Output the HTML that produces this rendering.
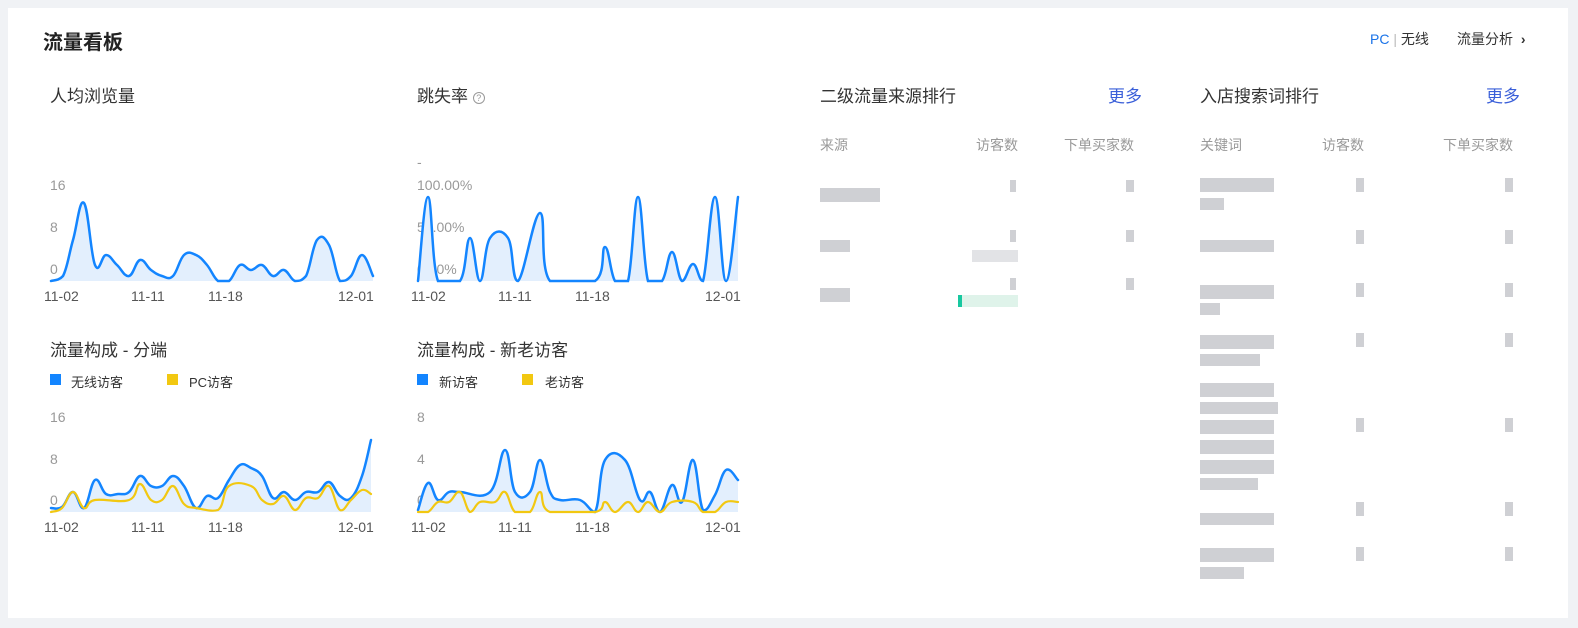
<!DOCTYPE html>
<html><head><meta charset="utf-8"><style>
*{margin:0;padding:0;box-sizing:border-box}
body{width:1578px;height:628px;background:#f0f2f5;font-family:"Liberation Sans","Noto Sans CJK SC",sans-serif;position:relative;overflow:hidden}
.card{position:absolute;left:8px;top:8px;width:1560px;height:610px;background:#fff}
.a{position:absolute;white-space:nowrap}
.t{font-size:17px;color:#333}
.h{font-size:15px;color:#999}
.g{position:absolute;background:#cfd0d4}
.gl{position:absolute;background:#e2e3e6}
.ax{font-size:14px;color:#999}
.xl{font-size:14px;color:#555}
.lg{font-size:13px;color:#333}
.sq{position:absolute;width:11px;height:11px}
</style></head><body>
<div class="card"></div>
<div class="a" style="left:43px;top:26px;font-size:20px;font-weight:bold;color:#222">流量看板</div>
<div class="a" style="left:1370px;top:29px;font-size:14px;color:#333"><span style="color:#1a73e8">PC</span> <span style="color:#bbb">|</span> 无线</div>
<div class="a" style="left:1457px;top:29px;font-size:14px;color:#333">流量分析 <span style="font-weight:bold;margin-left:4px">›</span></div>

<div class="a t" style="left:50px;top:82px">人均浏览量</div>
<div class="a t" style="left:417px;top:82px">跳失率 <span style="display:inline-block;width:12px;height:12px;border:1px solid #999;border-radius:50%;font-size:9px;color:#999;text-align:center;line-height:10px;vertical-align:1px">?</span></div>
<div class="a t" style="left:50px;top:336px">流量构成 - 分端</div>
<div class="a t" style="left:417px;top:336px">流量构成 - 新老访客</div>

<div class="sq" style="left:50px;top:374px;background:#1385ff"></div><div class="a lg" style="left:71px;top:372px">无线访客</div>
<div class="sq" style="left:167px;top:374px;background:#f2c811"></div><div class="a lg" style="left:189px;top:372px">PC访客</div>
<div class="sq" style="left:417px;top:374px;background:#1385ff"></div><div class="a lg" style="left:439px;top:372px">新访客</div>
<div class="sq" style="left:522px;top:374px;background:#f2c811"></div><div class="a lg" style="left:545px;top:372px">老访客</div>

<div class="a ax" style="left:50px;top:177px">16</div><div class="a ax" style="left:50px;top:219px">8</div><div class="a ax" style="left:50px;top:261px">0</div>
<div class="a ax" style="left:417px;top:154px">-</div>
<div class="a ax" style="left:417px;top:177px">100.00%</div><div class="a ax" style="left:417px;top:219px">50.00%</div><div class="a ax" style="left:417px;top:261px">0.00%</div>
<div class="a ax" style="left:50px;top:409px">16</div><div class="a ax" style="left:50px;top:451px">8</div><div class="a ax" style="left:50px;top:492px">0</div>
<div class="a ax" style="left:417px;top:409px">8</div><div class="a ax" style="left:417px;top:451px">4</div><div class="a ax" style="left:417px;top:492px">0</div>

<div class="a xl" style="left:44px;top:288px">11-02</div><div class="a xl" style="left:131px;top:288px">11-11</div><div class="a xl" style="left:208px;top:288px">11-18</div><div class="a xl" style="left:338px;top:288px">12-01</div>
<div class="a xl" style="left:411px;top:288px">11-02</div><div class="a xl" style="left:498px;top:288px">11-11</div><div class="a xl" style="left:575px;top:288px">11-18</div><div class="a xl" style="left:705px;top:288px">12-01</div>
<div class="a xl" style="left:44px;top:519px">11-02</div><div class="a xl" style="left:131px;top:519px">11-11</div><div class="a xl" style="left:208px;top:519px">11-18</div><div class="a xl" style="left:338px;top:519px">12-01</div>
<div class="a xl" style="left:411px;top:519px">11-02</div><div class="a xl" style="left:498px;top:519px">11-11</div><div class="a xl" style="left:575px;top:519px">11-18</div><div class="a xl" style="left:705px;top:519px">12-01</div>

<svg class="a" id="sv" style="left:0;top:0" width="1578" height="628"></svg>
<script>
var data=[
 {b:"#1385ff",base:281,p:"51,281 63,276 73,240 84,203 95,265 106,255 117,265 129,276 140,260 151,270 162,276 173,276 184,255 196,255 207,265 218,281 229,281 240,265 251,270 262,265 273,276 284,270 295,281 306,276 317,240 329,245 340,281 351,276 362,255 373,276",f:1},
 {b:"#1385ff",base:281,p:"418,281 428,197 438,281 460,281 470,238 480,281 490,238 508,238 518,281 540,213 550,281 595,281 605,247 615,281 628,281 638,197 648,281 662,281 672,252 682,281 693,264 703,281 715,197 726,281 738,197",f:1},
 {b:"#1385ff",base:512,p:"51,508 62,507 73,492 84,508 95,480 106,494 118,494 129,492 140,476 151,486 162,486 173,476 184,486 196,508 207,496 218,498 229,480 240,465 251,468 262,476 273,498 284,492 295,500 306,492 318,492 329,482 340,496 351,498 362,476 371,440",f:1},
 {b:"#1385ff",base:512,p:"418,510 428,483 438,500 449,492 460,492 490,492 505,450 515,492 530,492 540,460 550,492 560,500 580,500 595,512 605,460 625,460 640,500 650,492 660,512 672,485 682,502 693,460 703,510 715,495 726,470 738,480",f:1},
 {b:"#f2c811",base:512,p:"51,512 62,508 73,492 84,508 95,500 129,500 140,484 151,500 162,500 173,486 184,504 196,508 218,510 229,486 251,486 262,500 273,504 284,496 295,510 306,498 318,498 329,486 340,510 351,500 362,490 371,494",f:0},
 {b:"#f2c811",base:512,p:"418,512 428,512 438,502 449,502 460,492 470,512 480,502 495,502 505,492 515,512 530,512 540,492 550,512 595,512 605,502 615,512 628,502 638,512 648,502 660,512 672,502 693,502 703,512 715,512 726,502 738,502",f:0}
];
var h="",t=0.2;
data.forEach(function(s){
 var pts=s.p.split(" ").map(function(q){var a=q.split(",");return [+a[0],+a[1]]});
 var d="M"+pts[0];
 for(var i=0;i<pts.length-1;i++){
  var p0=pts[i-1]||pts[i],p1=pts[i],p2=pts[i+1],p3=pts[i+2]||p2;
  var c1=[p1[0]+(p2[0]-p0[0])*t,Math.min(s.base,p1[1]+(p2[1]-p0[1])*t)];
  var c2=[p2[0]-(p3[0]-p1[0])*t,Math.min(s.base,p2[1]-(p3[1]-p1[1])*t)];
  d+=" C"+c1+" "+c2+" "+p2;
 }
 if(s.f) h+='<path d="'+d+' L'+pts[pts.length-1][0]+','+s.base+' L'+pts[0][0]+','+s.base+'Z" fill="#e3effd"/>';
 h+='<path d="'+d+'" fill="none" stroke="'+s.b+'" stroke-width="'+(s.f?2.5:2.2)+'" stroke-linecap="round"/>';
});
document.getElementById("sv").innerHTML=h;
</script>

<div class="a t" style="left:820px;top:82px">二级流量来源排行</div>
<div class="a" style="left:1108px;top:82px;font-size:17px;color:#3a5fd9">更多</div>
<div class="a t" style="left:1200px;top:82px">入店搜索词排行</div>
<div class="a" style="left:1486px;top:82px;font-size:17px;color:#3a5fd9">更多</div>
<div class="a h" style="left:820px;top:135px;font-size:14px">来源</div>
<div class="a h" style="left:976px;top:135px;font-size:14px">访客数</div>
<div class="a h" style="left:1064px;top:135px;font-size:14px">下单买家数</div>
<div class="a h" style="left:1200px;top:135px;font-size:14px">关键词</div>
<div class="a h" style="left:1322px;top:135px;font-size:14px">访客数</div>
<div class="a h" style="left:1443px;top:135px;font-size:14px">下单买家数</div>

<div class="g" style="left:820px;top:188px;width:60px;height:14px"></div>
<div class="g" style="left:1010px;top:180px;width:6px;height:12px"></div>
<div class="g" style="left:1126px;top:180px;width:8px;height:12px"></div>
<div class="g" style="left:820px;top:240px;width:30px;height:12px"></div>
<div class="g" style="left:1010px;top:230px;width:6px;height:12px"></div>
<div class="gl" style="left:972px;top:250px;width:46px;height:12px"></div>
<div class="g" style="left:1126px;top:230px;width:8px;height:12px"></div>
<div class="g" style="left:820px;top:288px;width:30px;height:14px"></div>
<div class="g" style="left:1010px;top:278px;width:6px;height:12px"></div>
<div class="a" style="left:958px;top:295px;width:60px;height:12px;background:#dff3ea"></div>
<div class="a" style="left:958px;top:295px;width:4px;height:12px;background:#18c8a0"></div>
<div class="g" style="left:1126px;top:278px;width:8px;height:12px"></div>

<div class="g" style="left:1200px;top:178px;width:74px;height:14px"></div>
<div class="g" style="left:1200px;top:198px;width:24px;height:12px"></div>
<div class="g" style="left:1200px;top:240px;width:74px;height:12px"></div>
<div class="g" style="left:1200px;top:285px;width:74px;height:14px"></div>
<div class="g" style="left:1200px;top:303px;width:20px;height:12px"></div>
<div class="g" style="left:1200px;top:335px;width:74px;height:14px"></div>
<div class="g" style="left:1200px;top:354px;width:60px;height:12px"></div>
<div class="g" style="left:1200px;top:383px;width:74px;height:14px"></div>
<div class="g" style="left:1200px;top:402px;width:78px;height:12px"></div>
<div class="g" style="left:1200px;top:420px;width:74px;height:14px"></div>
<div class="g" style="left:1200px;top:440px;width:74px;height:14px"></div>
<div class="g" style="left:1200px;top:460px;width:74px;height:14px"></div>
<div class="g" style="left:1200px;top:478px;width:58px;height:12px"></div>
<div class="g" style="left:1200px;top:513px;width:74px;height:12px"></div>
<div class="g" style="left:1200px;top:548px;width:74px;height:14px"></div>
<div class="g" style="left:1200px;top:567px;width:44px;height:12px"></div>
<div class="g" style="left:1356px;top:178px;width:8px;height:14px"></div>
<div class="g" style="left:1356px;top:230px;width:8px;height:14px"></div>
<div class="g" style="left:1356px;top:283px;width:8px;height:14px"></div>
<div class="g" style="left:1356px;top:333px;width:8px;height:14px"></div>
<div class="g" style="left:1356px;top:418px;width:8px;height:14px"></div>
<div class="g" style="left:1356px;top:502px;width:8px;height:14px"></div>
<div class="g" style="left:1356px;top:547px;width:8px;height:14px"></div>
<div class="g" style="left:1505px;top:178px;width:8px;height:14px"></div>
<div class="g" style="left:1505px;top:230px;width:8px;height:14px"></div>
<div class="g" style="left:1505px;top:283px;width:8px;height:14px"></div>
<div class="g" style="left:1505px;top:333px;width:8px;height:14px"></div>
<div class="g" style="left:1505px;top:418px;width:8px;height:14px"></div>
<div class="g" style="left:1505px;top:502px;width:8px;height:14px"></div>
<div class="g" style="left:1505px;top:547px;width:8px;height:14px"></div>
</body></html>
